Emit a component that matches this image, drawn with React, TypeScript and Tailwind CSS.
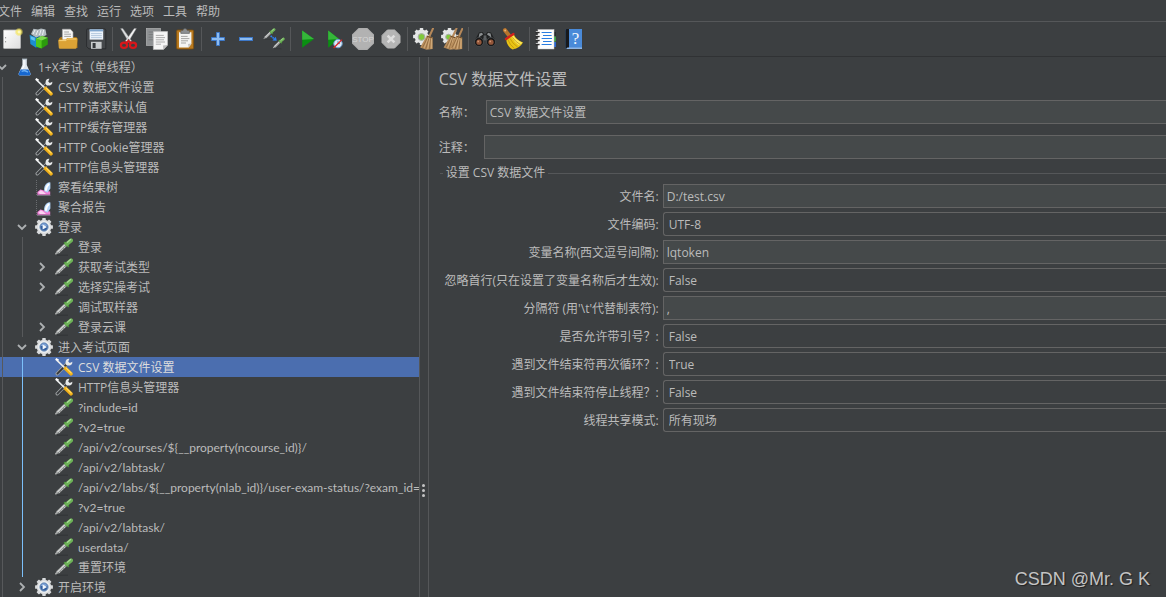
import { useState } from "react";
import type { ReactNode } from "react";

/* ---------- shared icon parts ---------- */

function Gear({ cx, cy, r, fill }: { cx: number; cy: number; r: number; fill: string }) {
  const angles = [0, 45, 90, 135, 180, 225, 270, 315];
  return (
    <g fill={fill}>
      <circle cx={cx} cy={cy} r={r * 0.82} />
      {angles.map((a) => (
        <rect
          key={a}
          x={cx - r * 0.2}
          y={cy - r}
          width={r * 0.4}
          height={r * 0.5}
          rx={r * 0.06}
          transform={`rotate(${a} ${cx} ${cy})`}
        />
      ))}
    </g>
  );
}

function Pipette() {
  return (
    <g>
      <path d="M2 17.2H13" stroke="#2b2d2e" strokeOpacity="0.6" strokeWidth="1" />
      <path d="M.2 16.4 1.4 13 9.4 5.6 12 8.2 4.2 15.4Z" fill="#7f8281" />
      <path d="M2.2 14.2 9.8 6.8" stroke="#d4d5d5" strokeWidth="1.6" />
      <path d="M.4 16.2 2.6 14" stroke="#a9abab" strokeWidth="1.4" />
      <path d="M4.2 14.6 10.8 8.2" stroke="#f2f2f2" strokeWidth="0.8" strokeDasharray="1.2 1" />
      <path d="M9.8 4.8 13.2 8.2" stroke="#4a8f3a" strokeWidth="2" strokeLinecap="round" />
      <path d="M11.8 6 16 2.4" stroke="#6db257" strokeWidth="4" strokeLinecap="round" />
      <path d="M12.4 4.2 15.6 1.6" stroke="#a9d898" strokeWidth="1.3" strokeLinecap="round" />
    </g>
  );
}

function Broom({ x = 0 }: { x?: number }) {
  return (
    <g transform={`translate(${x} 0)`}>
      <path d="M18.5.5 14.8 8.5" stroke="#b5885a" strokeWidth="2" strokeLinecap="round" />
      <path d="M12.4 7.4 18.2 9.2 18.2 21 12 21.8 5.6 19.4Z" fill="#b98e5c" />
      <path d="M13.4 9 8 19.6M14.6 9.8 11.2 20.8M16 10 15 20.8" stroke="#86623a" strokeWidth="0.7" />
      <path d="M13.8 9.6 9.8 19.8M15.4 10 13.2 20.8M17 10 16.8 20.6" stroke="#dcb98a" strokeWidth="0.7" />
      <path d="M12.4 8.2 18 10" stroke="#6d4c29" strokeWidth="1" />
    </g>
  );
}

function Icon({ children }: { children: ReactNode }) {
  return (
    <svg viewBox="0 0 22 22" className="size-[22px]" fill="none" aria-hidden="true">
      {children}
    </svg>
  );
}

/* ---------- toolbar icons ---------- */

const NewIcon = (
  <Icon>
    <defs>
      <linearGradient id="newPage" x1="0" y1="0" x2="1" y2="1">
        <stop offset="0" stopColor="#ffffff" />
        <stop offset="1" stopColor="#dedede" />
      </linearGradient>
      <radialGradient id="newGlow">
        <stop offset="0" stopColor="#fffef0" />
        <stop offset="0.45" stopColor="#f6ea72" />
        <stop offset="1" stopColor="#f0dc3c" stopOpacity="0" />
      </radialGradient>
    </defs>
    <rect x="2.5" y="2" width="17" height="18.5" rx="0.8" fill="url(#newPage)" stroke="#b5b5b5" strokeWidth="0.8" />
    <path d="M4.6 9v1.4M4.6 13v1.4" stroke="#999" strokeWidth="1" />
    <circle cx="18" cy="4" r="4.4" fill="url(#newGlow)" />
  </Icon>
);

const TemplatesIcon = (
  <Icon>
    <path d="M2 6 4.5.8 9 1.6 12 .6 16.5 1.4 17.5 7 9 11Z" fill="#b3bcc1" />
    <path d="M4 6 6 2M7 7 9 2.4M10.5 7 12 2M13.5 7 14.6 2" stroke="#eef2f4" strokeWidth="1" />
    <path d="M.6 6.8 7.4 9.4V20L1.4 16Z" fill="#1b8fd0" />
    <path d="M7.4 9.4 10.6 8V19L7.4 20Z" fill="#0c5d94" />
    <path d="M1.6 8.2 5.8 9.8V13L1.8 11.2Z" fill="#66c1ee" />
    <path d="M7 10.6 13.2 8 18.8 9.8V16.6L12.6 20.6 7 18.4Z" fill="#2b9a0c" />
    <path d="M7 10.6 12.6 12.6V20.6L7 18.4Z" fill="#4fc91b" />
    <path d="M7 10.6 13.2 8 18.8 9.8 12.6 12.6Z" fill="#7ed850" />
  </Icon>
);

const OpenIcon = (
  <Icon>
    <path d="M2 10.5 4 9H19.5L20.5 11V20H2Z" fill="#a87213" />
    <path d="M5.4 1.2H13.4L16 4V13H5.4Z" fill="#f6f6f6" stroke="#aaa" strokeWidth="0.6" />
    <path d="M7.2 4H12M7.2 6.2H14M7.2 8.4H14" stroke="#9a9a9a" strokeWidth="0.9" />
    <path d="M1.2 12.6Q1.2 11.6 2.2 11.6H8.6L10.2 10H19.4Q20.6 10 20.4 11.2L19.6 19.6Q19.4 20.8 18.4 20.8H3Q2 20.8 1.8 19.8Z" fill="#dba235" />
    <path d="M2.2 12.6H9L10.6 11H19.4" stroke="#f8d684" strokeWidth="0.9" />
  </Icon>
);

const SaveIcon = (
  <Icon>
    <path d="M2.6 1H19.6Q20.8 1 20.8 2.2V20.8H4L1.6 18.6V2Q1.6 1 2.6 1Z" fill="#45484b" stroke="#222426" strokeWidth="0.7" />
    <rect x="4.6" y="1.4" width="13.6" height="10.2" fill="#edf4fb" />
    <rect x="4.6" y="1.4" width="13.6" height="2" fill="#7fa6ce" />
    <path d="M6 5.6H16.8M6 7.6H16.8M6 9.6H16.8" stroke="#a6bed6" strokeWidth="0.8" />
    <rect x="6" y="13.8" width="10.6" height="7" fill="#c7cacc" />
    <rect x="7.6" y="15" width="3" height="5" fill="#34373a" />
  </Icon>
);

const CutIcon = (
  <Icon>
    <path d="M2.6.6 4.8.4 13.6 13 11 14.4Z" fill="#dcdedf" stroke="#8b8d8f" strokeWidth="0.4" />
    <path d="M18.4.6 16.2.4 7.4 13 10 14.4Z" fill="#f1f2f2" stroke="#8b8d8f" strokeWidth="0.4" />
    <circle cx="10.5" cy="11.6" r="0.9" fill="#6f7173" />
    <ellipse cx="6" cy="17.2" rx="3.1" ry="2.6" stroke="#d9161a" strokeWidth="2.2" />
    <ellipse cx="15" cy="17.2" rx="3.1" ry="2.6" stroke="#d9161a" strokeWidth="2.2" />
    <path d="M8 15 10.5 13 13 15" stroke="#d9161a" strokeWidth="2.2" />
  </Icon>
);

const CopyIcon = (
  <Icon>
    <rect x="0.4" y="0.4" width="14" height="17" fill="#8f9294" stroke="#b0b2b3" strokeWidth="0.7" />
    <path d="M2.6 4H9M2.6 6.6H7M2.6 9.2H7M2.6 11.8H7" stroke="#76797b" strokeWidth="0.9" />
    <path d="M7.4 3.6H21.6V17L17.4 21.6H7.4Z" fill="#f5f5f5" stroke="#c0c0c0" strokeWidth="0.7" />
    <path d="M9.8 7.4H17.8M9.8 9.6H19M9.8 11.8H18M9.8 14H19M9.8 16.2H15" stroke="#a5a5a5" strokeWidth="0.9" />
    <path d="M21.6 17 17 17.4 17.4 21.6Z" fill="#b9b9b9" />
  </Icon>
);

const PasteIcon = (
  <Icon>
    <rect x="2.6" y="2" width="17" height="19" rx="1.2" fill="#b97a1f" stroke="#7e4f0c" strokeWidth="0.8" />
    <path d="M5 4.2H17.4V16L14.6 19.4H5Z" fill="#f4f4f2" />
    <path d="M7 8.4H13.6M7 10.6H15.4M7 12.8H14M7 15H12" stroke="#9d9d9b" strokeWidth="0.9" />
    <path d="M17.4 15.6 14 16 14.6 19.4Z" fill="#c4c4c2" />
    <path d="M6.8 2.4H9Q9 .6 11 .6T13.2 2.4H15.4V5.4H6.8Z" fill="#8d9093" stroke="#56595b" strokeWidth="0.6" />
  </Icon>
);

const PlusIcon = (
  <Icon>
    <path d="M9.5 4.5H12.5V9.5H17.5V12.5H12.5V17.5H9.5V12.5H4.5V9.5H9.5Z" fill="#8dbcf0" stroke="#3d78c8" strokeWidth="1" />
  </Icon>
);

const MinusIcon = (
  <Icon>
    <rect x="4.5" y="9.5" width="13" height="3" fill="#8dbcf0" stroke="#3d78c8" strokeWidth="1" />
  </Icon>
);

const ToggleIcon = (
  <Icon>
    <g transform="translate(0.6 0) scale(0.66)">
      <Pipette />
    </g>
    <g transform="translate(9.8 9.4) scale(0.66)">
      <Pipette />
    </g>
    <path d="M7.6 7.8 11.8 11.2" stroke="#2f7ff0" strokeWidth="1.6" strokeDasharray="1.8 0.6" />
    <path d="M13.8 12.8 9.4 12.4 12.8 8.8Z" fill="#2f7ff0" />
  </Icon>
);

const StartIcon = (
  <Icon>
    <path d="M6.2 2.4 18 11 6.2 19.8Z" fill="#0a8f12" />
    <path d="M6.2 2.4 18 11 6.2 11.8Z" fill="#35b63a" />
  </Icon>
);

const StartNoPauseIcon = (
  <Icon>
    <path d="M4.2 2.4 15 11 4.2 19.8Z" fill="#0a8f12" />
    <path d="M4.2 2.4 15 11 4.2 11.8Z" fill="#35b63a" />
    <circle cx="14" cy="15.6" r="4.2" fill="#dceaf7" stroke="#6ea2d2" strokeWidth="1" />
    <path d="M14 15.6V12.8M14 15.6H16" stroke="#4b7fb2" strokeWidth="0.9" />
    <path d="M9.6 20 18 11.6" stroke="#dc2020" strokeWidth="1.3" />
  </Icon>
);

const StopIcon = (
  <Icon>
    <path d="M6.6 0H15.4L22 6.6V15.4L15.4 22H6.6L0 15.4V6.6Z" fill="#adadad" />
    <path d="M7 1.2H15L20.8 7V15L15 20.8H7L1.2 15V7Z" fill="#b2b2b2" />
    <text x="11" y="14" textAnchor="middle" fontFamily="Liberation Sans, sans-serif" fontSize="8" fill="#d6d6d6">
      STOP
    </text>
  </Icon>
);

const ShutdownIcon = (
  <Icon>
    <path d="M7.4 2H14.6L20 7.4V14.6L14.6 20H7.4L2 14.6V7.4Z" fill="#b5b5b5" stroke="#b5b5b5" strokeWidth="1" strokeLinejoin="round" />
    <path d="M7.6 7.6 14.4 14.4M14.4 7.6 7.6 14.4" stroke="#dedede" strokeWidth="2.6" />
  </Icon>
);

const ClearIcon = (
  <Icon>
    <Gear cx={8.5} cy={8.5} r={8.4} fill="#e4e6e6" />
    <circle cx="8.5" cy="9" r="3.4" fill="#7fc93a" stroke="#a9adac" strokeWidth="1" />
    <Broom x={1.5} />
  </Icon>
);

const ClearAllIcon = (
  <Icon>
    <Gear cx={8.5} cy={8.5} r={8.4} fill="#e4e6e6" />
    <circle cx="7.5" cy="9" r="2.8" fill="#7fc93a" stroke="#a9adac" strokeWidth="1" />
    <Broom x={-3} />
    <Broom x={3} />
  </Icon>
);

const SearchIcon = (
  <Icon>
    <path d="M5 4.6 8.6 4 10.4 6.4H11.6L13.4 4 17 4.6 21 12V16H13V10H9V16H1V12Z" fill="#1e2021" />
    <path d="M5.4 5.4 8 4.8 9 6.6 4.6 9.6ZM16.6 5.4 14 4.8 13 6.6 17.4 9.6Z" fill="#8a8e90" />
    <circle cx="5" cy="14" r="4.5" fill="#151617" stroke="#5c6062" strokeWidth="0.6" />
    <circle cx="17" cy="14" r="4.5" fill="#151617" stroke="#5c6062" strokeWidth="0.6" />
    <circle cx="5" cy="14.2" r="2.6" fill="#94573a" />
    <circle cx="17" cy="14.2" r="2.6" fill="#94573a" />
    <circle cx="4.2" cy="13.4" r="0.9" fill="#d09474" />
    <circle cx="16.2" cy="13.4" r="0.9" fill="#d09474" />
    <rect x="9.6" y="7.4" width="2.8" height="5" fill="#5b5f61" />
  </Icon>
);

const BroomIcon = (
  <Icon>
    <path d="M3 2.2 7 7.4" stroke="#b8742c" strokeWidth="4" strokeLinecap="round" />
    <circle cx="3.2" cy="2.4" r="1" fill="#e9b676" />
    <path d="M4.2 11 11.8 6.6Q14 12 21 14.6 18 20 10.6 21.6 4.6 18 4.2 11Z" fill="#e9c414" />
    <path d="M11.4 7.6Q14 12 20.4 14.8L17.2 17.6Q12 14 9.6 9Z" fill="#fbe75c" />
    <path d="M5.8 11.4Q7.4 16.6 12.4 20.6M8 10.4Q10.4 15.6 15.6 19M10.4 9.2Q13 13.6 18.4 16.6" stroke="#b98d08" strokeWidth="0.7" />
    <path d="M4 11 11.4 6" stroke="#d3201c" strokeWidth="2.4" strokeLinecap="round" />
  </Icon>
);

const ListIcon = (
  <Icon>
    <path d="M18 4H20.8V8H18Z" fill="#24272a" />
    <path d="M18 8.5H21V13.5H18Z" fill="#3aa043" />
    <path d="M18 14H21V19H18Z" fill="#2b66cc" />
    <rect x="3" y="1.6" width="16" height="19.4" fill="#fdfdfd" stroke="#c8c8c8" strokeWidth="0.5" />
    <path d="M6.6 4.5H16.6M8 7.5H16.6M6.6 10.5H17M8 13.5H16.6M6.6 16.5H16.6" stroke="#2a7de0" strokeWidth="1.1" />
    <path d="M.6 4.5H4.6M.6 8.5H4.6M.6 12.5H4.6M.6 16.5H4.6" stroke="#1f1f1f" strokeWidth="1.6" />
    <path d="M.8 3.6H4.4M.8 7.6H4.4M.8 11.6H4.4M.8 15.6H4.4" stroke="#eee" strokeWidth="0.8" />
  </Icon>
);

const HelpIcon = (
  <Icon>
    <path d="M2.4 2.4Q2.4 1 3.8 1H19V21H3.8Q2.4 21 2.4 19.6Z" fill="#4a8ad8" />
    <path d="M2.4 2.4Q2.4 1 3.8 1H6V20.6H3.8Q2.4 21 2.4 19.6Z" fill="#17191c" />
    <path d="M4.4 19.6H19V21H3.4Z" fill="#8fb6e4" />
    <text x="12.6" y="16.2" textAnchor="middle" fontFamily="Liberation Serif, serif" fontSize="17" fill="#f4f8fd">
      ?
    </text>
  </Icon>
);

const toolGroups: { label: string; icon: ReactNode }[][] = [
  [
    { label: "新建", icon: NewIcon },
    { label: "模板", icon: TemplatesIcon },
    { label: "打开", icon: OpenIcon },
    { label: "保存", icon: SaveIcon },
  ],
  [
    { label: "剪切", icon: CutIcon },
    { label: "复制", icon: CopyIcon },
    { label: "粘贴", icon: PasteIcon },
  ],
  [
    { label: "全部展开", icon: PlusIcon },
    { label: "全部折叠", icon: MinusIcon },
    { label: "切换", icon: ToggleIcon },
  ],
  [
    { label: "启动", icon: StartIcon },
    { label: "不停顿开始", icon: StartNoPauseIcon },
    { label: "停止", icon: StopIcon },
    { label: "关闭", icon: ShutdownIcon },
  ],
  [
    { label: "清除", icon: ClearIcon },
    { label: "清除全部", icon: ClearAllIcon },
  ],
  [
    { label: "搜索", icon: SearchIcon },
    { label: "重置搜索", icon: BroomIcon },
  ],
  [
    { label: "函数助手", icon: ListIcon },
    { label: "帮助主题", icon: HelpIcon },
  ],
];

/* ---------- tree ---------- */

type Kind = "plan" | "config" | "report" | "controller" | "sampler";

function NodeIcon({ kind }: { kind: Kind }) {
  return (
    <svg viewBox="0 0 18 18" className="size-[18px] shrink-0" fill="none" aria-hidden="true">
      {kind === "plan" && (
        <>
          <path d="M7.4 1H11.8V7L15.6 15.4Q16 17.4 14.2 17.6H5Q3.2 17.4 3.6 15.4L7.4 7Z" fill="#dfe7ee" />
          <path d="M5.8 11.4H13.4L15.5 15.6Q15.8 17.4 14.2 17.5H5Q3.4 17.4 3.7 15.6Z" fill="#1667cf" />
          <path d="M6.6 13.4 9.6 12.6 13 14.2" stroke="#6cb0f5" strokeWidth="1.4" />
          <path d="M9 2V8L7 11" stroke="#ffffff" strokeWidth="1.2" />
          <path d="M7 1.1H12.2" stroke="#aeb9c3" strokeWidth="1" />
        </>
      )}
      {kind === "config" && (
        <>
          <path d="M2.2 15.8 12.4 5.4" stroke="#9b9ea0" strokeWidth="3.4" strokeLinecap="round" />
          <path d="M2.4 15.6 11.6 6.4" stroke="#34373a" strokeWidth="1.8" strokeLinecap="round" />
          <path d="M17.4 3.8 14.8 5 13.2 3.4 14.4.8Q11.6.4 10.8 2.8 10.2 4.6 11 6.8 13.4 8 15.4 7.2 17.8 6.2 17.4 3.8Z" fill="#e6e8e9" />
          <path d="M1.2 1.6 9.8 9.8" stroke="#e9ebec" strokeWidth="1.6" strokeLinecap="round" />
          <path d="M.8.8 3.6 2.2" stroke="#ffffff" strokeWidth="1.6" />
          <path d="M10.6 10.4 16 15.8" stroke="#efae18" strokeWidth="3.6" strokeLinecap="round" />
          <path d="M11.2 10.2 16.2 15" stroke="#ffdc62" strokeWidth="1.1" strokeLinecap="round" />
        </>
      )}
      {kind === "report" && (
        <>
          <path d="M1.5 2V17.5" stroke="#6a6d70" strokeWidth="1" strokeDasharray="1 1" />
          <path d="M2 17.4H15.5" stroke="#8a7f92" strokeWidth="0.8" />
          <path d="M2.4 16.8V14L5.4 11.4 9 12.6 15.2 13.4V16.8Z" fill="#ee7fd6" />
          <path d="M3.4 14.4 5.8 12.2 8.2 13.6 11 16H5Z" fill="#fbd0f2" />
          <path d="M9.2 12.6Q8.6 8 11.8 5.2 13.8 4 15.4 4.4V10.4L12.6 14.4Q10 14.6 9.2 12.6Z" fill="#b5d6fb" />
          <path d="M11 12Q10.8 8.8 13.6 6.4" stroke="#ffffff" strokeWidth="2" strokeLinecap="round" />
        </>
      )}
      {kind === "controller" && (
        <>
          <Gear cx={9} cy={9} r={8.9} fill="#d9dbdd" />
          <circle cx="9" cy="9" r="6" fill="#eceeef" />
          <circle cx="9" cy="9" r="4.2" fill="#335f9f" stroke="#8fa9c9" strokeWidth="1" />
          <path d="M5.6 8Q6.4 5.4 9 5.2 11.6 5.4 12.4 8Z" fill="#7aa0d4" />
          <path d="M7.6 6.4 12 9 7.6 11.6Z" fill="#f3f7fc" />
        </>
      )}
      {kind === "sampler" && <Pipette />}
    </svg>
  );
}

type Row = {
  text: string;
  kind: Kind;
  depth: number;
  state?: "open" | "closed";
  active?: boolean;
};

const rows: Row[] = [
  { text: "1+X考试（单线程）", kind: "plan", depth: 0, state: "open" },
  { text: "CSV 数据文件设置", kind: "config", depth: 1 },
  { text: "HTTP请求默认值", kind: "config", depth: 1 },
  { text: "HTTP缓存管理器", kind: "config", depth: 1 },
  { text: "HTTP Cookie管理器", kind: "config", depth: 1 },
  { text: "HTTP信息头管理器", kind: "config", depth: 1 },
  { text: "察看结果树", kind: "report", depth: 1 },
  { text: "聚合报告", kind: "report", depth: 1 },
  { text: "登录", kind: "controller", depth: 1, state: "open" },
  { text: "登录", kind: "sampler", depth: 2 },
  { text: "获取考试类型", kind: "sampler", depth: 2, state: "closed" },
  { text: "选择实操考试", kind: "sampler", depth: 2, state: "closed" },
  { text: "调试取样器", kind: "sampler", depth: 2 },
  { text: "登录云课", kind: "sampler", depth: 2, state: "closed" },
  { text: "进入考试页面", kind: "controller", depth: 1, state: "open" },
  { text: "CSV 数据文件设置", kind: "config", depth: 2, active: true },
  { text: "HTTP信息头管理器", kind: "config", depth: 2, active: true },
  { text: "?include=id", kind: "sampler", depth: 2, active: true },
  { text: "?v2=true", kind: "sampler", depth: 2, active: true },
  { text: "/api/v2/courses/${__property(ncourse_id)}/", kind: "sampler", depth: 2, active: true },
  { text: "/api/v2/labtask/", kind: "sampler", depth: 2, active: true },
  { text: "/api/v2/labs/${__property(nlab_id)}/user-exam-status/?exam_id=", kind: "sampler", depth: 2, active: true },
  { text: "?v2=true", kind: "sampler", depth: 2, active: true },
  { text: "/api/v2/labtask/", kind: "sampler", depth: 2, active: true },
  { text: "userdata/", kind: "sampler", depth: 2, active: true },
  { text: "重置环境", kind: "sampler", depth: 2, active: true },
  { text: "开启环境", kind: "controller", depth: 1, state: "closed" },
];

function Chevron({ open }: { open: boolean }) {
  return (
    <svg viewBox="0 0 10 10" className="size-2.5" fill="none" stroke="#adb0b2" strokeWidth="1.8" aria-hidden="true">
      <path d={open ? "M1 3 5 7 9 3" : "M3 1 7 5 3 9"} />
    </svg>
  );
}

function TreeRow({ row, selected, onSelect }: { row: Row; selected: boolean; onSelect: () => void }) {
  return (
    <li
      role="treeitem"
      aria-level={row.depth + 1}
      aria-selected={selected}
      aria-expanded={row.state ? row.state === "open" : undefined}
      onClick={onSelect}
      className={`flex h-5 cursor-default items-center whitespace-nowrap ${selected ? "bg-[#4b6eaf] text-[#dddddd]" : ""}`}
    >
      {Array.from({ length: row.depth }, (_, level) => (
        <span key={level} className="flex h-5 w-5 shrink-0 justify-center">
          <span className={`h-5 w-px ${level === 1 && row.active ? "bg-[#7cc0fa]" : "bg-[#57595b]"}`} />
        </span>
      ))}
      <span className="flex w-5 shrink-0 justify-center">{row.state && <Chevron open={row.state === "open"} />}</span>
      <span className="flex items-center gap-[5px] pl-[3px]">
        <NodeIcon kind={row.kind} />
        <span className={`pt-0.5 ${row.kind === "sampler" ? "font-['Lato','Noto_Sans_CJK_SC',sans-serif]" : ""}`}>{row.text}</span>
      </span>
    </li>
  );
}

/* ---------- form ---------- */

type Field = { id: string; label: string; value: string; options?: string[] };

const fields: Field[] = [
  { id: "filename", label: "文件名:", value: "D:/test.csv" },
  { id: "encoding", label: "文件编码:", value: "UTF-8", options: ["UTF-8", "UTF-16", "ISO-8859-15", "US-ASCII"] },
  { id: "variables", label: "变量名称(西文逗号间隔):", value: "lqtoken" },
  { id: "ignoreFirst", label: "忽略首行(只在设置了变量名称后才生效):", value: "False", options: ["True", "False"] },
  { id: "delimiter", label: "分隔符 (用'\\t'代替制表符):", value: "," },
  { id: "quoted", label: "是否允许带引号？:", value: "False", options: ["True", "False"] },
  { id: "recycle", label: "遇到文件结束符再次循环？:", value: "True", options: ["True", "False"] },
  { id: "stopThread", label: "遇到文件结束符停止线程？:", value: "False", options: ["True", "False"] },
  { id: "shareMode", label: "线程共享模式:", value: "所有现场", options: ["所有现场", "当前线程组", "当前线程"] },
];

const inputClass =
  "h-6 w-full min-w-0 border border-r-0 border-[#646464] bg-[#45494a] px-[3px] text-[#bbbbbb] outline-none focus:border-[#7cc0fa]";

function FieldRow({ field }: { field: Field }) {
  return (
    <>
      <label htmlFor={field.id} className="pt-0.5 text-right">
        {field.label}
      </label>
      {field.options ? (
        <select
          id={field.id}
          defaultValue={field.value}
          className="h-6 w-full min-w-0 appearance-none rounded-l-[3px] border border-r-0 border-[#646464] bg-[#3c3f41] px-[5px] pt-0.5 text-[#bbbbbb] outline-none"
        >
          {field.options.map((o) => (
            <option key={o}>{o}</option>
          ))}
        </select>
      ) : (
        <input id={field.id} defaultValue={field.value} className={inputClass} />
      )}
    </>
  );
}

export default function App() {
  const [selected, setSelected] = useState(15);
  return (
    <div className="relative flex h-screen flex-col overflow-hidden bg-[#3c3f41] font-['Open_Sans','Noto_Sans_CJK_SC',sans-serif] text-[12px] leading-5 text-[#bbbbbb]">
      <nav className="-ml-0.5 flex h-[22px] shrink-0 gap-[9px] border-b border-[#555759] pt-0.5">
        {["文件", "编辑", "查找", "运行", "选项", "工具", "帮助"].map((m) => (
          <button key={m} type="button" className="whitespace-nowrap">
            {m}
          </button>
        ))}
      </nav>

      <div role="toolbar" className="-ml-0.5 flex h-[35px] shrink-0 items-center border-b border-[#303234]">
        {toolGroups.map((group, i) => (
          <div key={i} className="flex items-center">
            {i > 0 && <span className="mx-0.5 h-6 w-px bg-[#555759]" />}
            {group.map((tool) => (
              <button key={tool.label} type="button" aria-label={tool.label} className="flex h-7 w-7 items-center justify-center">
                {tool.icon}
              </button>
            ))}
          </div>
        ))}
      </div>

      <div className="flex min-h-0 flex-1">
        <aside className="w-[36%] shrink-0 overflow-hidden border-r border-[#555759]">
          <ul role="tree" className="-ml-2">
            {rows.map((row, i) => (
              <TreeRow key={i} row={row} selected={i === selected} onSelect={() => setSelected(i)} />
            ))}
          </ul>
        </aside>

        <div className="flex w-2 shrink-0 flex-col items-center justify-end gap-0.5 pb-[100px]">
          <span className="size-[3px] rounded-full bg-[#c4c4c4]" />
          <span className="size-[3px] rounded-full bg-[#c4c4c4]" />
          <span className="size-[3px] rounded-full bg-[#c4c4c4]" />
        </div>

        <main className="min-w-0 flex-1 border-l border-[#555759] pl-2.5 pt-2.5">
          <h1 className="text-[16px] leading-6">CSV 数据文件设置</h1>
          <div className="mt-[9px] flex items-center">
            <label htmlFor="name" className="w-[47px] shrink-0 pt-0.5">
              名称：
            </label>
            <input id="name" defaultValue="CSV 数据文件设置" className={inputClass} />
          </div>
          <div className="mt-[11px] flex items-center">
            <label htmlFor="comment" className="w-[45px] shrink-0 pt-0.5">
              注释：
            </label>
            <input id="comment" defaultValue="" className={inputClass} />
          </div>
          <section aria-labelledby="csv-config">
            <div className="mt-1 flex items-center gap-[3px] pl-px">
              <span className="h-px w-[3px] bg-[#555759]" />
              <h2 id="csv-config">设置 CSV 数据文件</h2>
              <span className="h-px flex-1 bg-[#555759]" />
            </div>
            <div className="mt-px grid grid-cols-[220px_1fr] items-center gap-1">
              {fields.map((f) => (
                <FieldRow key={f.id} field={f} />
              ))}
            </div>
          </section>
        </main>
      </div>

      <span className="pointer-events-none absolute bottom-1.5 right-4 font-['Liberation_Sans',sans-serif] text-[18px] leading-6 text-[#c4c4c4] [text-shadow:1px_1px_1px_#222]">
        CSDN @Mr. G K
      </span>
    </div>
  );
}
